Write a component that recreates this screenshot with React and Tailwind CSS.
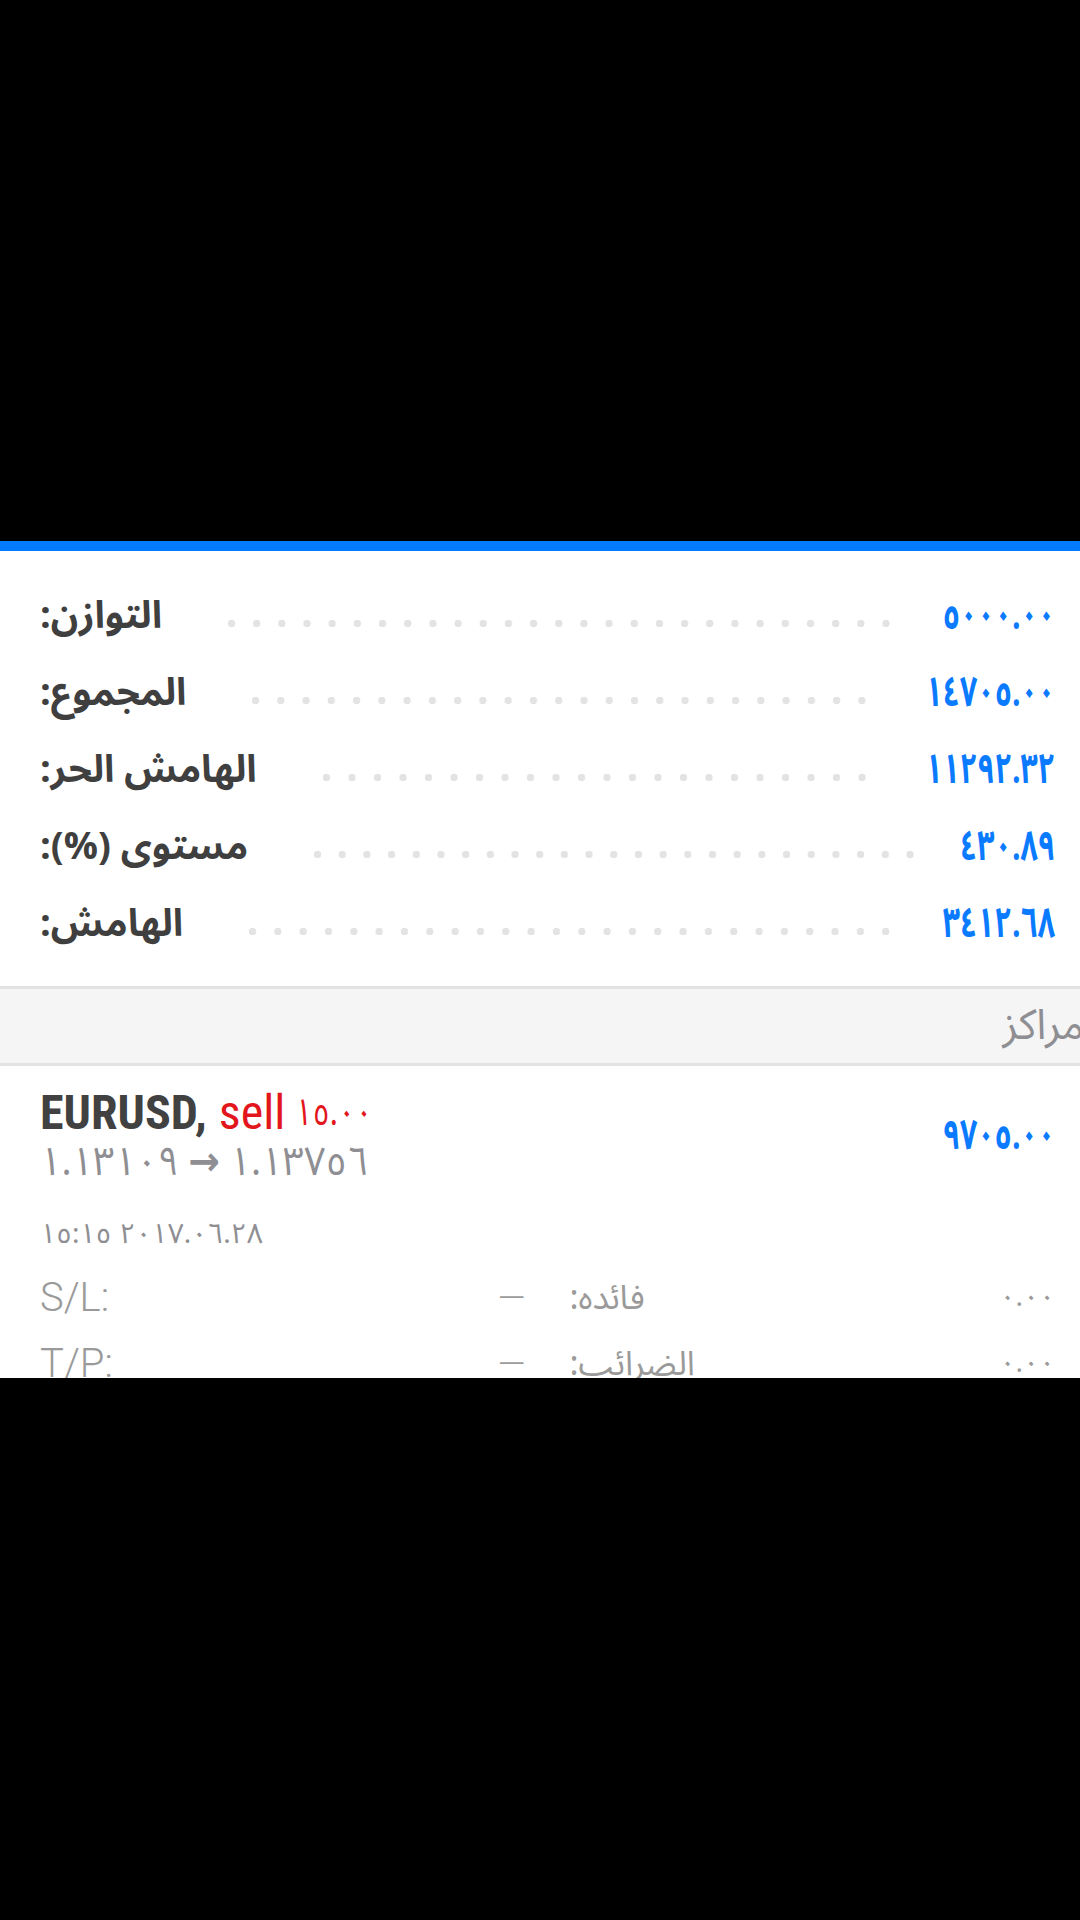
import React from "react";

const rows = [
  ["التوازن:", "٥٠٠٠.٠٠"],
  ["المجموع:", "١٤٧٠٥.٠٠"],
  ["الهامش الحر:", "١١٢٩٢.٣٢"],
  ["مستوى (%):", "٤٣٠.٨٩"],
  ["الهامش:", "٣٤١٢.٦٨"],
];

export default function App() {
  return (
    <div className="w-[1080px] h-[1920px] bg-black flex flex-col overflow-hidden font-['Noto_Sans_Arabic','Noto_Naskh_Arabic','DejaVu_Sans',sans-serif]">
      <div className="h-[541px] shrink-0" />
      <div className="h-[10px] shrink-0 bg-[#007aff]" />
      {/* summary */}
      <div className="bg-white pt-[26px] pb-[24px] pl-[40px] pr-[25px] flex flex-col">
        {rows.map(([label, value]) => (
          <div key={label} className="h-[77px] flex items-center">
            <span dir="rtl" className="text-[38px] font-bold text-[#3f3f3f] whitespace-nowrap leading-none">
              {label}
            </span>
            <div className="flex-1 h-[8px] ml-[66px] mr-[-8px] mt-[16px] bg-[radial-gradient(circle_at_3.5px_3.5px,#e3e3e3_3.5px,transparent_4px)] bg-[length:24.5px_8px] bg-repeat-space" />
            <span dir="ltr" className="inline-block origin-right scale-x-[0.72] text-[42px] font-bold text-[#0a7aff] whitespace-nowrap leading-none">
              {value}
            </span>
          </div>
        ))}
      </div>
      {/* section header */}
      <div className="h-[3px] bg-[#e3e3e3]" />
      <div className="h-[74px] bg-[#f5f5f5] flex items-center justify-end overflow-hidden">
        <span dir="rtl" className="text-[42px] text-[#8e8e93] whitespace-nowrap leading-none mr-[-4px]">
          مراكز
        </span>
      </div>
      <div className="h-[3px] bg-[#e3e3e3]" />
      {/* position */}
      <div className="bg-white h-[312px] overflow-hidden pl-[40px] pr-[25px] pt-[20px] flex flex-col">
        <div className="flex items-center">
          <div className="flex-1 flex flex-col">
            <div className="h-[54px] flex items-center whitespace-nowrap font-['Roboto_Condensed','Liberation_Sans_Narrow','Roboto',sans-serif] text-[48px] leading-none">
              <span className="font-bold text-[#414141]">EURUSD,</span>
              <span className="text-[#e2161c] ml-[12px]">sell</span>
              <span dir="ltr" className="inline-block origin-left scale-x-[0.8] text-[#e2161c] ml-[10px] text-[38px] font-['Noto_Sans_Arabic','DejaVu_Sans',sans-serif]">١٥.٠٠</span>
            </div>
            <div className="h-[46px] flex items-center">
              <div className="inline-flex items-center gap-[10px] origin-left scale-x-[0.94] whitespace-nowrap text-[40px] leading-none text-[#8e8e93]">
                <span dir="ltr">١.١٣١٠٩</span>
                <span className="font-bold">→</span>
                <span dir="ltr">١.١٣٧٥٦</span>
              </div>
            </div>
          </div>
          <span dir="ltr" className="inline-block origin-right scale-x-[0.72] text-[42px] font-bold text-[#0a7aff] whitespace-nowrap leading-none">
            ٩٧٠٥.٠٠
          </span>
        </div>
        <div className="h-[40px] mt-[35px] flex items-center gap-[8px] whitespace-nowrap text-[28px] leading-none text-[#8e8e93]">
          <span dir="ltr">١٥:١٥</span>
          <span dir="ltr">٢٠١٧.٠٦.٢٨</span>
        </div>
        <div className="mt-[16px] grid grid-cols-2 gap-x-[44px] text-[#9a9a9a] text-[40px] leading-none">
          <div className="h-[66px] flex items-center justify-between">
            <span className="font-['Roboto','Liberation_Sans',sans-serif] font-light">S/L:</span>
            <span className="font-['Roboto','Liberation_Sans',sans-serif] font-light text-[36px]">—</span>
          </div>
          <div className="h-[66px] flex items-center justify-between">
            <span dir="rtl" className="text-[34px]">فائده:</span>
            <span dir="ltr" className="text-[28px]">٠.٠٠</span>
          </div>
          <div className="h-[66px] flex items-center justify-between">
            <span className="font-['Roboto','Liberation_Sans',sans-serif] font-light">T/P:</span>
            <span className="font-['Roboto','Liberation_Sans',sans-serif] font-light text-[36px]">—</span>
          </div>
          <div className="h-[66px] flex items-center justify-between">
            <span dir="rtl" className="text-[34px]">الضرائب:</span>
            <span dir="ltr" className="text-[28px]">٠.٠٠</span>
          </div>
        </div>
      </div>
      <div className="flex-1 bg-black" />
    </div>
  );
}
